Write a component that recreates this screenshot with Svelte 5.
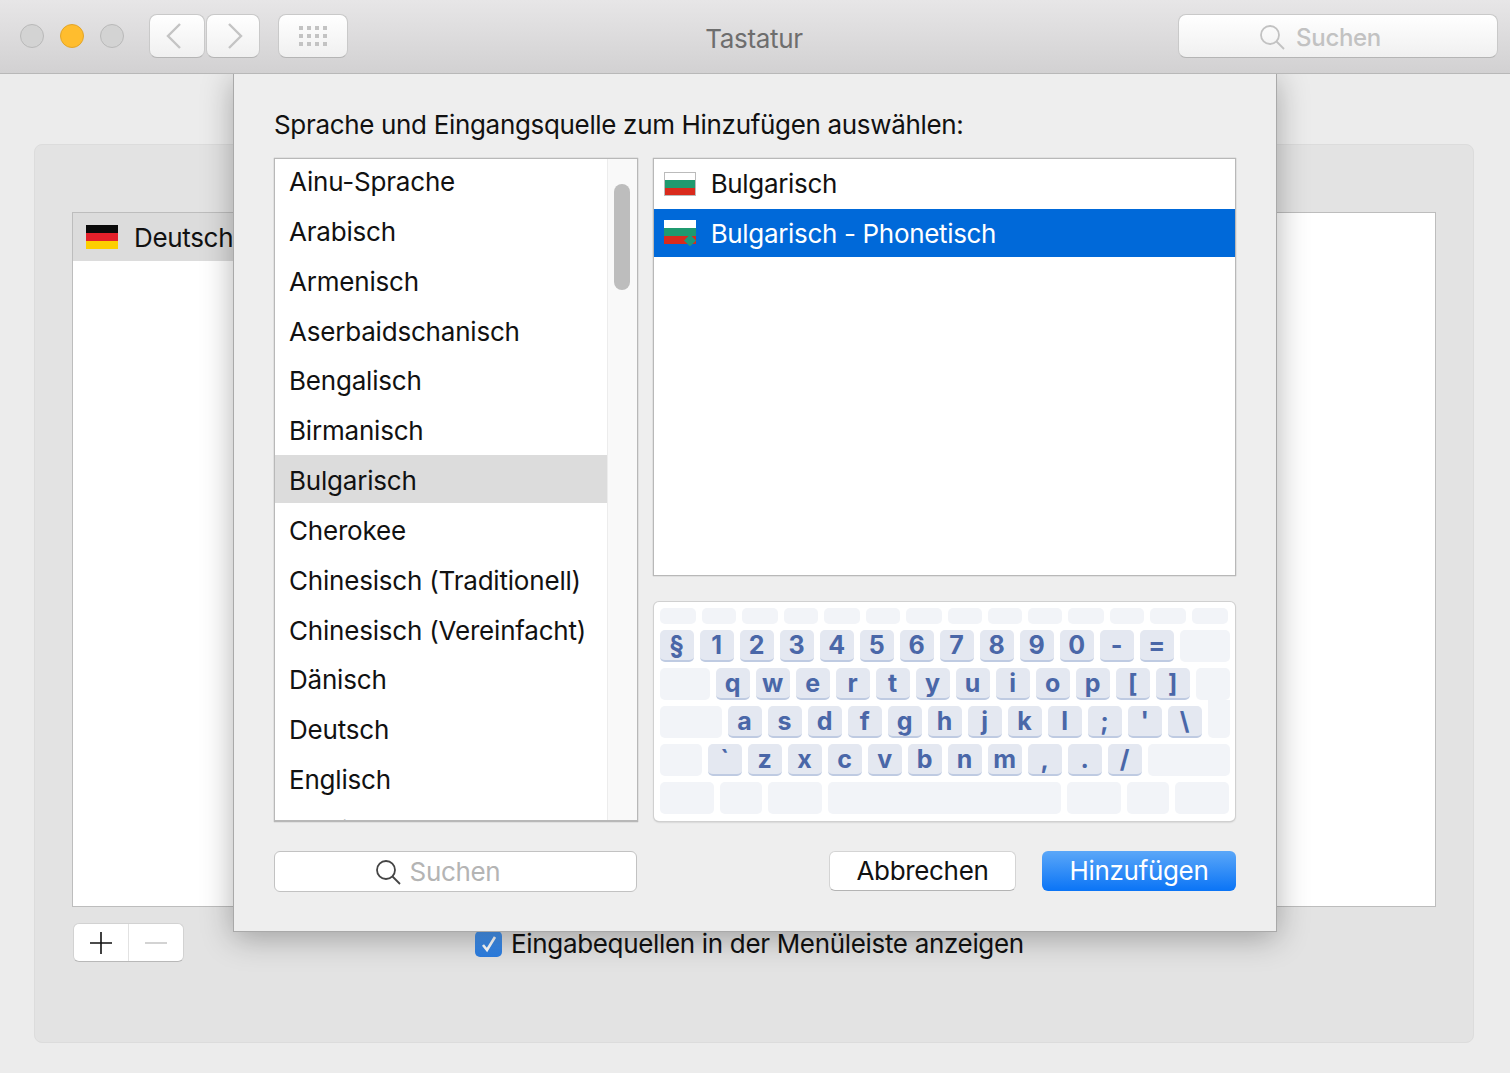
<script lang="ts">
  const languages = [
    "Ainu-Sprache", "Arabisch", "Armenisch", "Aserbaidschanisch", "Bengalisch", "Birmanisch",
    "Bulgarisch", "Cherokee", "Chinesisch (Traditionell)", "Chinesisch (Vereinfacht)",
    "Dänisch", "Deutsch", "Englisch", "Estnisch"
  ];

  const fnRow = [36, 34, 36, 34, 36, 34, 36, 34, 34, 34, 36, 34, 36, 36];
  const keyRows = [
    { before: 0, keys: "§ 1 2 3 4 5 6 7 8 9 0 - =", after: 50, joined: false },
    { before: 50, keys: "q w e r t y u i o p [ ]", after: 34, joined: false },
    { before: 62, keys: "a s d f g h j k l ; ' \\", after: 22, joined: true },
    { before: 42, keys: "` z x c v b n m , . /", after: 82, joined: false }
  ];
  const spaceRow = [54, 42, 54, 233, 54, 42, 54];
</script>

<div class="window">
  <header class="toolbar">
    <div class="lights">
      <span class="light"></span>
      <span class="light yellow"></span>
      <span class="light"></span>
    </div>
    <div class="nav">
      <button class="tool back" aria-label="Zurück">
        <svg width="16" height="26" viewBox="0 0 16 26" fill="none" stroke="#c4c4c4" stroke-width="2.4">
          <path d="M14 1 2 13l12 12" />
        </svg>
      </button>
      <button class="tool forward" aria-label="Vor">
        <svg width="16" height="26" viewBox="0 0 16 26" fill="none" stroke="#c4c4c4" stroke-width="2.4">
          <path d="M2 1l12 12L2 25" />
        </svg>
      </button>
    </div>
    <button class="tool grid-btn" aria-label="Alle einblenden">
      <span class="dots">
        {#each Array(12) as _}
          <i></i>
        {/each}
      </span>
    </button>
    <h1>Tastatur</h1>
    <div class="tool top-search">
      <svg width="26" height="26" viewBox="0 0 26 26" fill="none" stroke="#c2c2c2" stroke-width="1.8">
        <circle cx="11" cy="11" r="9" />
        <path d="M17.5 17.5 25 25" />
      </svg>
      <span>Suchen</span>
    </div>
  </header>

  <main class="content">
    <section class="panel">
      <div class="list-box">
        <div class="list-head">
          <svg class="flag" width="32" height="24" viewBox="0 0 32 24">
            <rect width="32" height="8" fill="#0a0a0a" />
            <rect y="8" width="32" height="8" fill="#e3202a" />
            <rect y="16" width="32" height="8" fill="#fdcf00" />
          </svg>
          <span>Deutsch</span>
        </div>
      </div>
      <div class="panel-foot">
        <div class="stepper">
          <button aria-label="Hinzufügen">
            <svg width="22" height="22" viewBox="0 0 22 22" stroke="#111" stroke-width="1.6"><path d="M11 0v22M0 11h22" /></svg>
          </button>
          <button aria-label="Entfernen">
            <svg width="22" height="22" viewBox="0 0 22 22" stroke="#c8c8c8" stroke-width="1.6"><path d="M0 11h22" /></svg>
          </button>
        </div>
        <label class="menu-check">
          <span class="check">
            <svg width="20" height="20" viewBox="0 0 20 20" fill="none" stroke="#fff" stroke-width="2.6"><path d="M4 11l4 5 8-13" /></svg>
          </span>
          Eingabequellen in der Menüleiste anzeigen
        </label>
      </div>
    </section>
  </main>

  <div class="sheet">
    <h2>Sprache und Eingangsquelle zum Hinzufügen auswählen:</h2>
    <div class="columns">
      <div class="languages">
        <ul>
          {#each languages as lang}
            <li class:active={lang === "Bulgarisch"}>{lang}</li>
          {/each}
        </ul>
        <div class="track"><span class="thumb"></span></div>
      </div>
      <div class="right">
        <div class="sources">
          <div class="source">
            <svg class="flag" width="32" height="24" viewBox="0 0 32 24">
              <rect width="32" height="8" fill="#fff" />
              <rect y="8" width="32" height="8" fill="#1f9a6f" />
              <rect y="16" width="32" height="8" fill="#d92a1c" />
              <rect x=".5" y=".5" width="31" height="23" fill="none" stroke="#bbb" />
            </svg>
            <span>Bulgarisch</span>
          </div>
          <div class="source selected">
            <svg class="flag" width="32" height="26" viewBox="0 0 32 26">
              <rect width="32" height="8" fill="#fff" />
              <rect y="8" width="32" height="8" fill="#1f9a6f" />
              <rect y="16" width="32" height="8" fill="#d92a1c" />
              <path d="M26 14.5l6 6-6 6-6-6z" fill="#1d9a78" />
            </svg>
            <span>Bulgarisch - Phonetisch</span>
          </div>
        </div>
        <div class="keyboard">
          <div class="kb-row fn">
            {#each fnRow as w}
              <span class="blank" style:width="{w}px"></span>
            {/each}
          </div>
          {#each keyRows as row}
            <div class="kb-row">
              {#if row.before}
                <span class="blank" style:width="{row.before}px"></span>
              {/if}
              {#each row.keys.split(" ") as key}
                <span class="key">{key}</span>
              {/each}
              <span class="blank" class:joined={row.joined} style:width="{row.after}px"></span>
            </div>
          {/each}
          <div class="kb-row">
            {#each spaceRow as w}
              <span class="blank" style:width="{w}px"></span>
            {/each}
          </div>
        </div>
      </div>
    </div>
    <div class="actions">
      <div class="sheet-search">
        <svg width="26" height="26" viewBox="0 0 26 26" fill="none" stroke="#444" stroke-width="1.8">
          <circle cx="11" cy="11" r="9" />
          <path d="M17.5 17.5 25 25" />
        </svg>
        <span>Suchen</span>
      </div>
      <div class="buttons">
        <button class="btn">Abbrechen</button>
        <button class="btn primary">Hinzufügen</button>
      </div>
    </div>
  </div>
</div>

<style>
  :global(body) {
    margin: 0;
    background: #ececec;
  }

  .window {
    position: relative;
    width: 1510px;
    height: 1073px;
    overflow: hidden;
    font-family: "Inter", "Liberation Sans", sans-serif;
    font-size: 26px;
    letter-spacing: -0.33px;
    color: #111;
  }

  .toolbar {
    position: relative;
    z-index: 2;
    height: 74px;
    box-sizing: border-box;
    display: flex;
    align-items: flex-start;
    padding: 14px 12px 0 20px;
    background: linear-gradient(#e7e6e7, #d2d1d2);
    border-bottom: 1px solid #b8b8b8;
  }

  .lights {
    display: flex;
    gap: 16px;
    margin-top: 10px;
    margin-right: 25px;
  }

  .light {
    width: 24px;
    height: 24px;
    box-sizing: border-box;
    border-radius: 50%;
    background: #d3d3d3;
    border: 1px solid #b9b9b9;
  }

  .light.yellow {
    background: #ffbd2e;
    border-color: #e2a52a;
  }

  .tool {
    height: 44px;
    box-sizing: border-box;
    background: linear-gradient(#fff, #f0f0f0);
    border: 1px solid #c9c9c9;
    border-bottom-color: #b5b5b5;
    border-radius: 8px;
    padding: 0;
    display: flex;
    align-items: center;
    justify-content: center;
  }

  .nav {
    display: flex;
    gap: 1px;
    margin-right: 18px;
  }

  .back {
    width: 56px;
  }

  .back svg {
    margin-right: 6px;
  }

  .forward {
    width: 54px;
  }

  .forward svg {
    margin-left: 4px;
  }

  .grid-btn {
    width: 70px;
  }

  .dots {
    display: grid;
    grid-template-columns: repeat(4, 4px);
    gap: 4px;
  }

  .dots i {
    width: 4px;
    height: 4px;
    background: #c3c3c3;
  }

  h1 {
    position: absolute;
    left: 0;
    right: 2px;
    top: 23px;
    margin: 0;
    text-align: center;
    font-size: 26px;
    font-weight: 400;
    line-height: 32px;
    color: #6e6e6e;
  }

  .top-search {
    margin-left: auto;
    width: 320px;
    gap: 11px;
    padding-right: 36px;
    padding-top: 2px;
    color: #c2c2c2;
    font-size: 24px;
    font-weight: 500;
  }

  .content {
    padding: 70px 36px 30px 34px;
  }

  .panel {
    height: 899px;
    box-sizing: border-box;
    background: #e3e3e3;
    border: 1px solid #dcdcdc;
    border-radius: 8px;
    padding: 67px 37px 0;
  }

  .list-box {
    height: 695px;
    box-sizing: border-box;
    background: #fff;
    border: 1px solid #bdbdbd;
  }

  .list-head {
    width: 300px;
    height: 48px;
    background: #dcdcdc;
    display: flex;
    align-items: center;
    gap: 16px;
    padding-left: 13px;
    box-sizing: border-box;
  }

  .flag {
    flex: none;
  }

  .panel-foot {
    display: flex;
    align-items: flex-start;
    margin-top: 16px;
  }

  .stepper {
    display: flex;
    width: 111px;
    height: 39px;
    box-sizing: border-box;
    margin-left: 1px;
    background: #fff;
    border: 1px solid #d2d2d2;
    border-bottom-color: #b8b8b8;
    border-radius: 6px;
  }

  .stepper button {
    flex: 1;
    background: none;
    border: 0;
    padding: 0;
    display: flex;
    align-items: center;
    justify-content: center;
  }

  .stepper button + button {
    border-left: 1px solid #e2e2e2;
  }

  .menu-check {
    display: flex;
    align-items: center;
    gap: 9px;
    margin-left: 291px;
    margin-top: 6px;
    line-height: 30px;
  }

  .check {
    width: 27px;
    height: 26px;
    border-radius: 5px;
    background: linear-gradient(#4a97f0, #2a7ce0);
    display: flex;
    align-items: center;
    justify-content: center;
  }

  .sheet {
    position: absolute;
    left: 233px;
    top: 73px;
    width: 1044px;
    height: 859px;
    box-sizing: border-box;
    background: #eeeeee;
    border: 1px solid #a9a9a9;
    border-top: 0;
    box-shadow: 0 6px 30px rgba(0, 0, 0, 0.3);
    padding: 36px 40px 0;
  }

  h2 {
    margin: 0 0 17px;
    font-size: 26px;
    font-weight: 400;
    line-height: 32px;
    color: #111;
  }

  .columns {
    display: flex;
    gap: 15px;
    height: 664px;
  }

  .languages {
    position: relative;
    width: 364px;
    box-sizing: border-box;
    background: #fff;
    border: 1px solid #b8b8b8;
    border-bottom-width: 2px;
    box-shadow: 0 0 1px rgba(0, 0, 0, 0.35);
    overflow: hidden;
  }

  ul {
    margin: -3px 0 0;
    padding: 0 30px 0 0;
    list-style: none;
  }

  li {
    height: 48px;
    line-height: 51px;
    margin-bottom: 1.85px;
    padding-left: 14px;
    white-space: nowrap;
    letter-spacing: -0.2px;
  }

  li:last-child {
    line-height: 54px;
  }

  li.active {
    background: #dcdcdc;
  }

  .track {
    position: absolute;
    top: 0;
    right: 0;
    bottom: 0;
    width: 29px;
    background: #f9f9f9;
    border-left: 1px solid #ececec;
  }

  .thumb {
    position: absolute;
    left: 6px;
    top: 25px;
    width: 16px;
    height: 106px;
    border-radius: 8px;
    background: #bdbdbd;
  }

  .right {
    width: 584px;
    display: flex;
    flex-direction: column;
    gap: 26px;
  }

  .sources {
    height: 418px;
    box-sizing: border-box;
    background: #fff;
    border: 1px solid #b8b8b8;
    box-shadow: 0 0 1px rgba(0, 0, 0, 0.35);
  }

  .source {
    height: 49px;
    display: flex;
    align-items: center;
    gap: 15px;
    padding-left: 10px;
    margin-bottom: 1px;
  }

  .source.selected {
    height: 48px;
    background: #0069d9;
    color: #fff;
  }

  .keyboard {
    width: 581px;
    height: 219px;
    margin-left: 1px;
    box-sizing: border-box;
    background: #fff;
    border-radius: 5px;
    box-shadow: 0 0 0 1px #d0d0d0, 0 1px 2px #aaa;
    padding: 6px 6px 0;
    display: flex;
    flex-direction: column;
    gap: 6px;
    font-size: 25px;
    font-weight: 700;
    letter-spacing: 0;
    color: #4a67a8;
  }

  .kb-row {
    display: flex;
    gap: 6px;
    height: 32px;
  }

  .kb-row.fn {
    height: 16px;
  }

  .blank {
    flex: none;
    background: #f2f4f8;
    border-radius: 5px;
  }

  .blank.joined {
    margin-top: -6px;
    height: 38px;
    margin-left: auto;
    border-top-left-radius: 0;
    border-top-right-radius: 0;
  }

  .key {
    flex: none;
    width: 34px;
    height: 32px;
    box-sizing: border-box;
    background: #e4e8f1;
    border-bottom: 2px solid #bfcbe2;
    border-radius: 5px;
    text-align: center;
    line-height: 31px;
  }

  .actions {
    display: flex;
    align-items: flex-start;
    justify-content: space-between;
    margin-top: 29px;
  }

  .sheet-search {
    width: 363px;
    height: 41px;
    box-sizing: border-box;
    background: #fff;
    border: 1px solid #c2c2c2;
    border-radius: 6px;
    display: flex;
    align-items: center;
    justify-content: center;
    gap: 9px;
    padding-right: 36px;
    color: #b4b4b4;
  }

  .buttons {
    display: flex;
    gap: 26px;
  }

  .btn {
    width: 187px;
    height: 40px;
    box-sizing: border-box;
    padding: 0 0 2px;
    font: inherit;
    letter-spacing: inherit;
    color: #111;
    background: #fff;
    border: 1px solid #d4d4d4;
    border-bottom-color: #b4b4b4;
    border-radius: 6px;
  }

  .btn.primary {
    width: 194px;
    color: #fff;
    background: linear-gradient(#5ba7f8, #0a74f6);
    border: 0;
  }
</style>
